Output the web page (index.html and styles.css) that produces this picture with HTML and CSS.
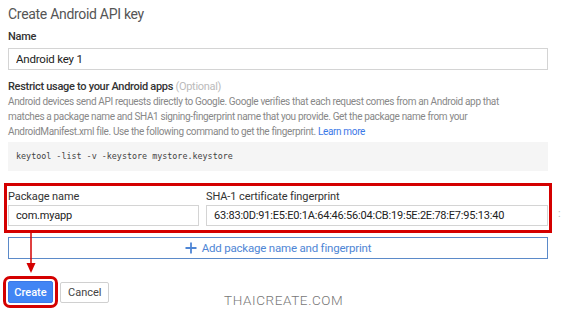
FILE: index.html
```html
<!DOCTYPE html>
<html lang="en">
<head>
<meta charset="UTF-8">
<meta name="viewport" content="width=device-width, initial-scale=1.0">
<title>Create Android API key</title>
<link rel="stylesheet" href="styles.css">
</head>
<body>
    <div class="page">
        <h1 class="title">Create Android API key</h1>

        <label class="field-label" for="keyName">Name</label>
        <input class="text-input" id="keyName" type="text" value="Android key 1">

        <div class="restrict">
            <div class="field-label">Restrict usage to your Android apps <span class="optional">(Optional)</span></div>
            <p class="desc">Android devices send API requests directly to Google. Google verifies that each request comes from an Android app that<br>matches a package name and SHA1 signing-fingerprint name that you provide. Get the package name from your<br>AndroidManifest.xml file. Use the following command to get the fingerprint. <a href="#" class="link">Learn more</a></p>
            <div class="code">keytool -list -v -keystore mystore.keystore</div>
        </div>

        <div class="fingerprint highlight">
            <div class="col">
                <label class="field-label" for="pkg">Package name</label>
                <input class="text-input small" id="pkg" type="text" value="com.myapp">
            </div>
            <div class="col">
                <label class="field-label" for="sha">SHA-1 certificate fingerprint</label>
                <input class="text-input small" id="sha" type="text" value="63:83:0D:91:E5:E0:1A:64:46:56:04:CB:19:5E:2E:78:E7:95:13:40">
            </div>
        </div>

        <button class="add-button" type="button">
            <svg width="12" height="12" viewBox="0 0 12 12"><path d="M6 0.5v11M0.5 6h11" stroke="#4f86d5" stroke-width="1.8" fill="none"/></svg>
            Add package name and fingerprint
        </button>

        <div class="actions">
            <button class="btn primary highlight-btn" type="button">Create</button>
            <button class="btn" type="button">Cancel</button>
        </div>
    </div>

    <!-- annotation arrow from the fingerprint box down to Create -->
    <svg class="arrow" width="12" height="44" viewBox="0 0 12 44">
        <path d="M6 0v34" stroke="#d40000" stroke-width="1.5"/>
        <path d="M1.5 32h9L6 42z" fill="#d40000"/>
    </svg>
    <span class="edge-mark">:</span>
    <div class="watermark">THAICREATE.COM</div>
</body>
</html>
```

FILE: styles.css
```css
body {
    margin: 0;
    font-family: Roboto, "Liberation Sans", Arial, sans-serif;
    background-color: #fff;
    color: #333;
    width: 563px;
    height: 314px;
    overflow: hidden;
    position: relative;
}
.page {
    padding: 4px 15px 0 8px;
}
.title {
    font-size: 14px;
    font-weight: 400;
    line-height: 20px;
    letter-spacing: -0.3px;
    color: #555;
    margin: 0;
}
.field-label {
    display: block;
    font-size: 11px;
    line-height: 14px;
    font-weight: 500;
    letter-spacing: -0.3px;
    color: #333;
    margin-top: 6px;
}
.optional {
    font-weight: 400;
    color: #bbb;
}
.text-input {
    display: block;
    box-sizing: border-box;
    width: 100%;
    height: 22px;
    margin: 4px 0 0;
    padding: 0 7px;
    border: 1px solid #d4d4d4;
    font-family: inherit;
    font-size: 11.5px;
    letter-spacing: -0.2px;
    color: #222;
    background: #fff;
}
.text-input.small {
    height: 21px;
    margin-top: 1px;
    font-size: 11px;
}
.restrict .field-label {
    margin-top: 10px;
}
.desc {
    margin: 0;
    font-size: 10px;
    line-height: 15px;
    letter-spacing: -0.35px;
    white-space: nowrap;
    color: #888;
}
.link {
    color: #3b78e7;
    text-decoration: none;
}
.code {
    margin-top: 3px;
    height: 29px;
    line-height: 29px;
    padding: 0 8px;
    background-color: #f5f5f5;
    font-family: "DejaVu Sans Mono", "Liberation Mono", monospace;
    font-size: 8.4px;
    color: #444;
}
.fingerprint {
    display: grid;
    grid-template-columns: 191px 1fr;
    column-gap: 7px;
    margin: 12px -4px 0 -4px;
    padding: 0 1px 4px 1px;
}
.fingerprint .field-label {
    margin-top: 4px;
    font-weight: 400;
    letter-spacing: -0.1px;
    color: #333;
}
.highlight {
    border: 3px solid #d40000;
}
.add-button {
    display: flex;
    align-items: center;
    justify-content: center;
    gap: 5px;
    box-sizing: border-box;
    width: 100%;
    height: 22px;
    margin-top: 4px;
    border: 1px solid #5b8ac9;
    background: #fff;
    font-family: inherit;
    font-size: 11.5px;
    letter-spacing: -0.2px;
    color: #4f86d5;
    padding: 0;
}
.actions {
    display: flex;
    align-items: flex-start;
    gap: 7px;
    margin-top: 22px;
}
.btn {
    box-sizing: border-box;
    height: 21px;
    padding: 0 7px;
    margin-top: 1px;
    border: 1px solid #d0d0d0;
    border-radius: 2px;
    background: #fff;
    font-family: inherit;
    font-size: 11px;
    color: #444;
}
.btn.primary {
    height: 22px;
    width: 45px;
    margin-top: 0;
    padding: 0;
    border: 1px solid #3b78e7;
    background: #4285f4;
    color: #fff;
    font-weight: 500;
}
.highlight-btn {
    outline: 3px solid #d40000;
    outline-offset: 2px;
}
.arrow {
    position: absolute;
    left: 25px;
    top: 231px;
}
.edge-mark {
    position: absolute;
    left: 558px;
    top: 207px;
    font-size: 11px;
    color: #bbb;
}
.watermark {
    position: absolute;
    left: 224px;
    top: 292px;
    font-size: 13.5px;
    font-weight: 300;
    letter-spacing: 0.6px;
    color: #777;
}
```
